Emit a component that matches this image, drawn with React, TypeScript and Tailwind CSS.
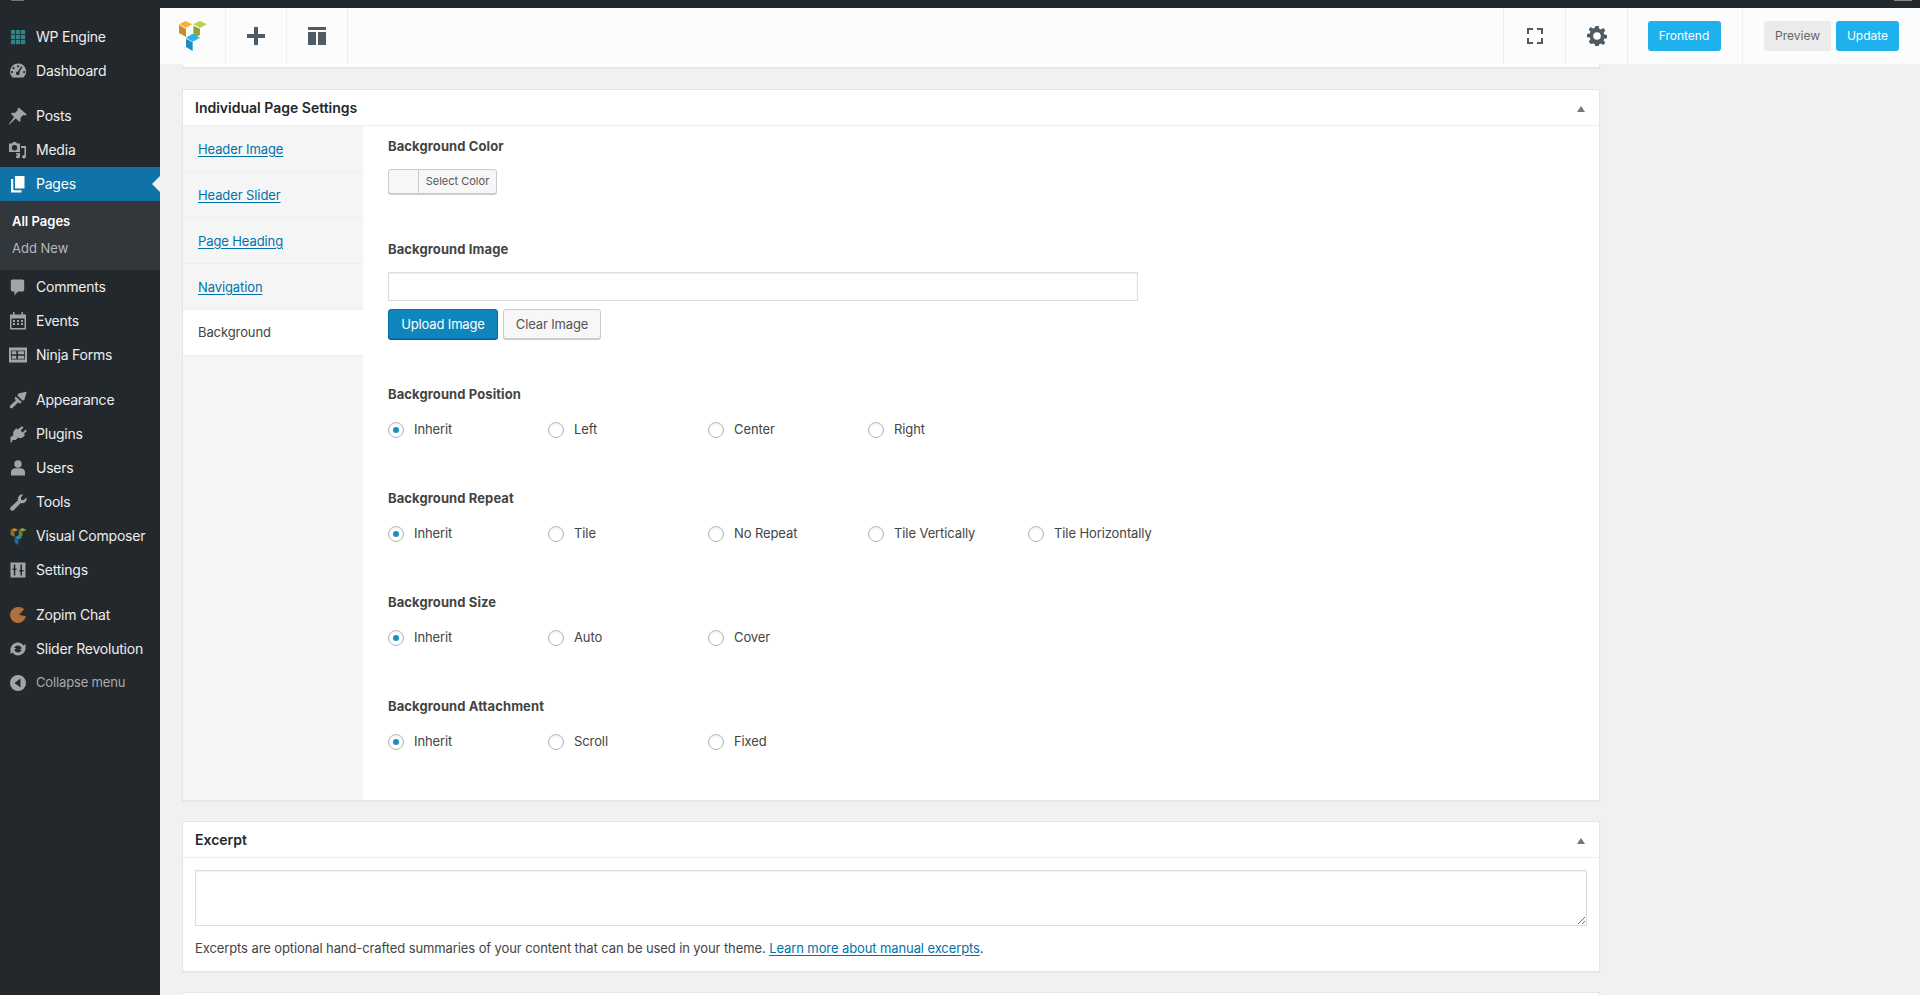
import React from "react";

const ic = "w-5 h-5 fill-[#a0a5aa]";
const I = {
  grid: () => (
    <svg viewBox="0 0 20 20" className="w-5 h-5 fill-[#2f8288]">
      {[3, 8, 13].flatMap((x) => [3, 8, 13].map((y) => <rect key={x + "-" + y} x={x} y={y} width="4.2" height="4.2" />))}
    </svg>
  ),
  dash: () => (
    <svg viewBox="0 0 20 20" className={ic}>
      <path fillRule="evenodd" d="M10 2.500a8 8 0 0 0-8 8c0 2.300 1 4.400 2.500 5.900h11A8 8 0 0 0 10 2.500zM10 4.200a1.100 1.100 0 1 1 0 2.200 1.100 1.100 0 0 1 0-2.200zM5.500 6a1.100 1.100 0 1 1 0 2.200A1.100 1.100 0 0 1 5.500 6zM3.900 10a1.100 1.100 0 1 1 0 2.200 1.100 1.100 0 0 1 0-2.200zM16.100 10a1.100 1.100 0 1 1 0 2.200 1.100 1.100 0 0 1 0-2.200zM13.300 5.300l1.200.7-3.200 5.300a1.800 1.800 0 1 1-1.400-.8z" />
    </svg>
  ),
  pin: () => (
    <svg viewBox="0 0 20 20" className={ic}>
      <path d="M11 1.800l7.800 6.600-1.300 1.100-2-.5-3.200 3.100c.5 1.500.4 2.900-.4 4L7.600 12.500 1.500 18.500l-.5-.5 5.100-7-3.300-3.500c1.300-.8 2.700-.9 4.100-.4l2.900-3.100-.2-1.700z" />
    </svg>
  ),
  media: () => (
    <svg viewBox="0 0 20 20" className={ic}>
      <path fillRule="evenodd" d="M1 3.500h3L5 2h3l1 1.500h3V12H1zM6.500 5a2.700 2.700 0 1 0 0 5.400 2.700 2.700 0 0 0 0-5.400z" />
      <path d="M13 6h5v10.500c0 1.300-1 2-2.100 2s-1.900-.7-1.900-1.700.9-1.800 2.400-1.800V8H13zM8 13h4v3.500c0 1.200-1 2-2 2S8 17.800 8 16.800s.8-1.800 2-1.800v-.6H8z" />
    </svg>
  ),
  pages: () => (
    <svg viewBox="0 0 20 20" className="w-5 h-5 fill-white">
      <path d="M7 2h9.500v12.500H7z" />
      <path d="M3 5h2.300v11.300h8.200v2.200H3z" />
    </svg>
  ),
  comment: () => (
    <svg viewBox="0 0 20 20" className={ic}>
      <path d="M4.500 2.500h10A1.700 1.700 0 0 1 16.200 4.200v8.600a1.700 1.700 0 0 1-1.700 1.700H10l-3.500 4v-4h-2a1.700 1.700 0 0 1-1.700-1.700V4.200a1.700 1.700 0 0 1 1.700-1.700z" />
    </svg>
  ),
  cal: () => (
    <svg viewBox="0 0 20 20" className={ic}>
      <path fillRule="evenodd" d="M5 1h1.500v2.500h7V1H15v2.500h3v15H2v-15h3zM3.500 7.500v9.500h13V7.500zM5 9h2v2H5zM9 9h2v2H9zM13 9h2v2h-2zM5 12h2v2H5zM9 12h2v2H9zM13 12h2v2h-2z" />
    </svg>
  ),
  form: () => (
    <svg viewBox="0 0 20 20" className={ic}>
      <path fillRule="evenodd" d="M1 2.500h18v15H1zM3 5.500v9h14v-9zM3.800 6.300h4.500v3H3.800zM10 6.300h6.200v3H10zM3.800 10.700h4.500v3H3.800zM10 10.700h6.200v3H10z" />
    </svg>
  ),
  brush: () => (
    <svg viewBox="0 0 20 20" className={ic}>
      <path d="M10.500 3.500l7.500-1.700.5.700-2 7-1.700 1.200-5.500-5.200zM7.700 6.500l6 5.500-1.700 1.800-1.800-1.500-5.700 5.800c-.8.500-2.200.3-2.600-.7-.3-.7-.1-1.300.4-1.900l5.600-5.300-1.400-1.900z" />
    </svg>
  ),
  plug: () => (
    <svg viewBox="0 0 20 20" className={ic}>
      <path d="M14.200 2.200l1.400 1.400-3 3 2 2 3-3 1.200 1.300-3 3 1.200 1.200-1.500 1.600c-1.500 1.500-3.500 1.900-5.200.9L7.500 16H4.300v2.200H2.500v-5l3-2.300c-.7-1.700-.3-3.500 1.200-5L8.200 4.300l1.100 1.100z" />
    </svg>
  ),
  user: () => (
    <svg viewBox="0 0 20 20" className={ic}>
      <circle cx="10" cy="6" r="3.700" />
      <path d="M3 17.500v-3.500c0-2.200 2.200-3.700 4.500-3.700h5c2.300 0 4.500 1.500 4.500 3.700v3.500z" />
    </svg>
  ),
  wrench: () => (
    <svg viewBox="0 0 20 20" className={ic}>
      <path d="M18.500 5.500c.4 1.900-.2 3.600-1.500 4.700-1.200 1-2.800 1.300-4.300.8L6 18c-1 1-2.300 1-3.200.2-.9-.9-.9-2.300.1-3.200l7.100-6.700c-.5-1.600-.1-3.200 1-4.400 1.100-1.100 2.700-1.600 4.200-1.300L12.800 5.700l.4 2 2 .6z" />
    </svg>
  ),
  vc: (small?: boolean) => (
    <svg viewBox="57 60 84 90" className={small ? "w-[17px] h-[17px] opacity-70" : "w-7 h-[30px]"}>
      <path fill="#fbb034" d="M57 70l20-10 20 10-19 10z" />
      <path fill="#c98f2c" d="M57 72l21 11v25L57 96z" />
      <path fill="#b8d145" d="M100 70l20-10 21 10-21 10z" />
      <path fill="#8ea63a" d="M100 74l20 9v19l-20 10z" />
      <path fill="#2cb1ec" d="M78 110l20-12 22 12-22 12z" />
      <path fill="#1a8cc5" d="M78 113l20 11v26l-20-12z" />
    </svg>
  ),
  sliders: () => (
    <svg viewBox="0 0 20 20" className={ic}>
      <path fillRule="evenodd" d="M2.500 2.500h15v15h-15zM5.800 4.500v4H4.500v1.500h1.300v5.500h1.500V10h1.200V8.500H7.300v-4zM12.500 4.500V10h-1.300v1.500h1.300v4H14v-4h1.500V10H14V4.500z" />
    </svg>
  ),
  pac: () => (
    <svg viewBox="0 0 20 20" className="w-5 h-5 fill-[#b0703b]">
      <path d="M10 2a8 8 0 1 0 7.900 9.300L11 9.800l5.300-5.600A8 8 0 0 0 10 2z" />
    </svg>
  ),
  sync: () => (
    <svg viewBox="0 0 20 20" className={ic}>
      <path d="M10 3.500c2.300 0 4.200 1.100 5.400 2.900L17.500 5v6h-6l2.200-1.800C13 7.500 11.600 6.500 10 6.500c-2 0-3.600 1.400-4.200 3.200l-3-.8C3.600 5.800 6.500 3.500 10 3.500zM2.500 9h6L6.300 10.800C7 12.500 8.400 13.500 10 13.500c2 0 3.600-1.400 4.200-3.200l3 .8c-.8 3.100-3.700 5.400-7.200 5.400-2.300 0-4.200-1.100-5.400-2.900L2.500 15z" />
    </svg>
  ),
  collapse: () => (
    <svg viewBox="0 0 20 20" className={ic}>
      <path fillRule="evenodd" d="M10 2a8 8 0 1 1 0 16 8 8 0 0 1 0-16zM12.500 5.500L6.500 10l6 4.500z" />
    </svg>
  ),
};

function Item({ icon, label, active, dim }: { icon: React.ReactNode; label: string; active?: boolean; dim?: boolean }) {
  return (
    <div className={"relative flex h-[34px] items-center " + (active ? "bg-[#0f73a8] text-white" : dim ? "text-[#aaaaaa]" : "text-[#eeeeee]")}>
      <span className="flex w-9 shrink-0 justify-center">{icon}</span>
      <span className={dim ? "text-[13px] tracking-[-0.15px]" : "text-sm tracking-[-0.22px]"}>{label}</span>
      {active && (
        <span className="absolute right-0 top-[9px] h-0 w-0 border-y-8 border-r-8 border-y-transparent border-r-[#f1f1f1]" />
      )}
    </div>
  );
}

function Sidebar() {
  return (
    <aside className="flex w-40 shrink-0 flex-col bg-[#23282d] pt-3">
      <Item icon={I.grid()} label="WP Engine" />
      <Item icon={I.dash()} label="Dashboard" />
      <div className="mt-[11px]">
        <Item icon={I.pin()} label="Posts" />
        <Item icon={I.media()} label="Media" />
        <Item icon={I.pages()} label="Pages" active />
        <div className="h-[69px] bg-[#32373c] pl-3 pt-[11px] text-[13px]">
          <div className="flex h-5 items-center font-semibold text-white">All Pages</div>
          <div className="mt-[7px] flex h-5 items-center text-[#b4b9be]">Add New</div>
        </div>
        <Item icon={I.comment()} label="Comments" />
        <Item icon={I.cal()} label="Events" />
        <Item icon={I.form()} label="Ninja Forms" />
      </div>
      <div className="mt-[11px]">
        <Item icon={I.brush()} label="Appearance" />
        <Item icon={I.plug()} label="Plugins" />
        <Item icon={I.user()} label="Users" />
        <Item icon={I.wrench()} label="Tools" />
        <Item icon={I.vc(true)} label="Visual Composer" />
        <Item icon={I.sliders()} label="Settings" />
      </div>
      <div className="mt-[11px]">
        <Item icon={I.pac()} label="Zopim Chat" />
        <Item icon={I.sync()} label="Slider Revolution" />
        <Item icon={I.collapse()} label="Collapse menu" dim />
      </div>
    </aside>
  );
}

function ToolCell({ children, w }: { children: React.ReactNode; w: string }) {
  return <div className={"flex h-full items-center justify-center border-r border-[#f0f0f0] " + w}>{children}</div>;
}

function Toolbar() {
  return (
    <div className="relative z-10 flex h-14 shrink-0 items-center bg-[#fcfcfc]">
      <ToolCell w="w-[66px]">{I.vc()}</ToolCell>
      <ToolCell w="w-[61px]">
        <svg viewBox="0 0 18 18" className="h-[18px] w-[18px] fill-[#515b64]">
          <path d="M7 0h4v7h7v4h-7v7H7v-7H0V7h7z" />
        </svg>
      </ToolCell>
      <ToolCell w="w-[61px]">
        <svg viewBox="0 0 18 18" className="h-[18px] w-[18px] fill-[#515b64]">
          <path d="M0 0h18v3H0zM0 5h8v13H0zM10 5h8v13h-8z" />
        </svg>
      </ToolCell>
      <div className="h-full flex-1 border-r border-[#f0f0f0]" />
      <ToolCell w="w-[62px]">
        <svg viewBox="0 0 16 16" className="h-4 w-4 fill-[#515b64]">
          <path d="M0 0h6v2H2v4H0zM10 0h6v6h-2V2h-4zM0 10h2v4h4v2H0zM14 10h2v6h-6v-2h4z" />
        </svg>
      </ToolCell>
      <ToolCell w="w-[62px]">
        <svg viewBox="0 0 20 20" className="h-5 w-5 fill-[#515b64]">
          <path fillRule="evenodd" d="M8.300 0h3.400l.5 2.800 1.700.7L16.300 2l2 2.400-1.700 2.300.7 1.700 2.700.5v3.300l-2.700.5-.7 1.700 1.700 2.300-2 2.400-2.400-1.500-1.700.7-.5 2.700H8.300l-.5-2.700-1.700-.7L3.700 18l-2-2.400 1.700-2.300-.7-1.700L0 11.200V7.900l2.700-.5.7-1.700L1.700 3.400l2-2.400 2.400 1.500 1.700-.7zM10 6.200a3.800 3.800 0 1 0 0 7.600 3.800 3.800 0 0 0 0-7.600z" />
        </svg>
      </ToolCell>
      <div className="flex h-full w-[115px] items-center justify-center border-r border-[#f0f0f0] pr-[2px]">
        <button className="h-[30px] w-[73px] rounded-[3px] bg-[#1fb0ee] text-xs text-white">Frontend</button>
      </div>
      <div className="flex h-full w-[177px] items-center gap-[5px] pl-[21px]">
        <button className="h-[30px] w-[67px] rounded-[3px] bg-[#ebebeb] text-xs text-[#666666]">Preview</button>
        <button className="h-[30px] w-[63px] rounded-[3px] bg-[#1fb0ee] text-xs text-white">Update</button>
      </div>
    </div>
  );
}

function Radio({ label, checked }: { label: string; checked?: boolean }) {
  return (
    <div className="flex w-40 items-center">
      <span className="flex h-4 w-4 shrink-0 items-center justify-center rounded-full border border-[#b4b9be] bg-white shadow-[inset_0_1px_2px_rgba(0,0,0,0.1)]">
        {checked && <span className="h-[6px] w-[6px] rounded-full bg-[#1e8cbe]" />}
      </span>
      <span className="ml-[10px]">{label}</span>
    </div>
  );
}

const labelCls = "flex h-5 items-center pt-[2px] font-bold tracking-[0.1px]";

function Group({ title, options, first }: { title: string; options: string[]; first?: boolean }) {
  return (
    <div className={first ? "mt-[45px]" : "mt-12"}>
      <div className={labelCls}>{title}</div>
      <div className="mt-4 flex h-5 items-center">
        {options.map((o, i) => (
          <Radio key={o} label={o} checked={i === 0} />
        ))}
      </div>
    </div>
  );
}

function Triangle() {
  return <span className="mt-[2px] h-0 w-0 border-x-[4px] border-b-[6px] border-x-transparent border-b-[#72777c]" />;
}

function CardHead({ title }: { title: string }) {
  return (
    <div className="flex h-9 items-center justify-between border-b border-[#eeeeee] pl-3 pr-[14px]">
      <h2 className="text-sm font-semibold text-[#23282d]">{title}</h2>
      <Triangle />
    </div>
  );
}

const cardCls = "border border-[#e5e5e5] bg-white shadow-[0_1px_1px_rgba(0,0,0,0.04)]";

function Tab({ label }: { label: string }) {
  return (
    <div className="flex h-[46px] items-center border-b border-[#eeeeee] pl-[15px] pt-[2px] text-[13px] tracking-[-0.1px] text-[#0073aa] underline underline-offset-2">
      {label}
    </div>
  );
}

function Settings() {
  return (
    <section className={"mt-[21px] " + cardCls}>
      <CardHead title="Individual Page Settings" />
      <div className="flex h-[674px]">
        <div className="w-[180px] shrink-0 bg-[#f5f5f5]">
          <Tab label="Header Image" />
          <Tab label="Header Slider" />
          <Tab label="Page Heading" />
          <Tab label="Navigation" />
          <div className="flex h-[46px] items-center border-b border-[#eeeeee] bg-white pl-[15px] pt-px text-[13px] tracking-[-0.1px] text-[#444444]">Background</div>
        </div>
        <div className="flex-1 pl-[25px] pt-[10px] text-[13px] tracking-[-0.1px] text-[#444444]">
          <div className={labelCls}>Background Color</div>
          <div className="mt-[13px] flex h-[25px] w-[109px] overflow-hidden rounded-[3px] border border-[#cccccc] bg-[#f7f7f7] shadow-[0_1px_0_#cccccc]">
            <span className="w-[30px] border-r border-[#cccccc]" />
            <span className="flex-1 text-center text-[11px] leading-[22px] tracking-normal text-[#555555]">Select Color</span>
          </div>
          <div className={"mt-[45px] " + labelCls}>Background Image</div>
          <div className="mt-[13px] h-[29px] w-[750px] border border-[#dddddd] bg-white shadow-[inset_0_1px_2px_rgba(0,0,0,0.07)]" />
          <div className="mt-2 flex gap-[5px]">
            <button className="h-[30px] w-[110px] rounded-[3px] border border-[#0073aa] bg-[#1085bb] pt-[2px] text-[13px] tracking-[-0.15px] text-white shadow-[0_1px_0_#006799]">Upload Image</button>
            <button className="h-[30px] w-[98px] rounded-[3px] border border-[#cccccc] bg-[#f7f7f7] pt-[2px] text-[13px] tracking-[-0.15px] text-[#555555] shadow-[0_1px_0_#cccccc]">Clear Image</button>
          </div>
          <Group first title="Background Position" options={["Inherit", "Left", "Center", "Right"]} />
          <Group title="Background Repeat" options={["Inherit", "Tile", "No Repeat", "Tile Vertically", "Tile Horizontally"]} />
          <Group title="Background Size" options={["Inherit", "Auto", "Cover"]} />
          <Group title="Background Attachment" options={["Inherit", "Scroll", "Fixed"]} />
        </div>
      </div>
    </section>
  );
}

function Excerpt() {
  return (
    <section className={"mt-5 " + cardCls}>
      <CardHead title="Excerpt" />
      <div className="px-3 pt-3 text-[13px] tracking-[-0.1px] text-[#444444]">
        <textarea className="block h-[56px] w-full resize-y border border-[#dddddd] bg-white shadow-[inset_0_1px_2px_rgba(0,0,0,0.07)]" />
        <p className="mt-[12px] leading-5">
          Excerpts are optional hand-crafted summaries of your content that can be used in your theme.{" "}
          <span className="text-[#0073aa] underline underline-offset-2">Learn more about manual excerpts</span>.
        </p>
      </div>
      <div className="h-[13px]" />
    </section>
  );
}

export default function App() {
  return (
    <div className="flex h-[995px] w-[1920px] flex-col overflow-hidden bg-[#f1f1f1] font-['Inter','Liberation_Sans',sans-serif]">
      <div className="flex h-2 shrink-0 items-start bg-[#23282d]">
        <span className="ml-[11px] h-px w-[13px] rounded-b bg-[#777777]" />
        <span className="ml-auto mr-2 h-px w-[18px] bg-[#888888]" />
      </div>
      <div className="flex min-h-0 flex-1">
        <Sidebar />
        <main className="flex min-w-0 flex-1 flex-col">
          <Toolbar />
          <div className="ml-[22px] w-[1418px]">
            <div className={"h-1 border-t-0 " + cardCls} />
            <Settings />
            <Excerpt />
            <div className={"mt-5 h-10 " + cardCls} />
          </div>
        </main>
      </div>
    </div>
  );
}
